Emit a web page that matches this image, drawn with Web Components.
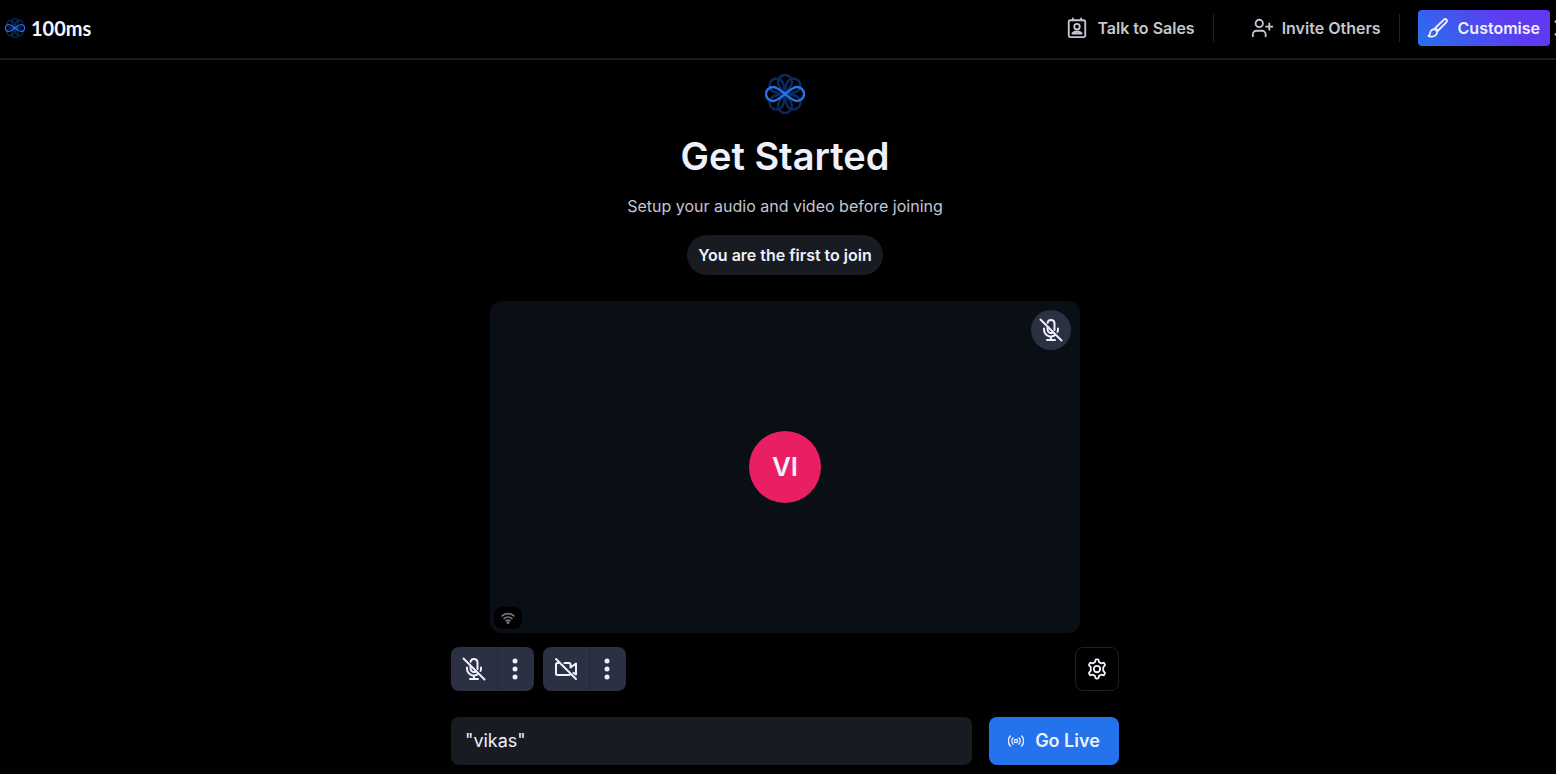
<!DOCTYPE html>
<html lang="en">
<head>
<meta charset="utf-8">
<meta name="viewport" content="width=device-width, initial-scale=1">
<title>100ms</title>
<style>
    body {
        margin: 0;
        background: #000;
        color: #eff0fa;
        font-family: Inter, "Liberation Sans", sans-serif;
        font-size: 16px;
    }
</style>
</head>
<body>
<preview-page></preview-page>

<script>
// icons are drawn on a 24 x 24 grid
const icons = {
    contact: `<rect x="3" y="3.500" width="18" height="18.500" rx="2"/><path d="M7.500 1.500v2M16.500 1.500v2"/><circle cx="12" cy="10.500" r="3"/><path d="M7 18c1-1.900 2.500-2.300 5-2.300s4 .4 5 2.300z"/>`,
    invite: `<circle cx="9" cy="7" r="4"/><path d="M2 21v-2a4 4 0 0 1 4-4h6a4 4 0 0 1 4 4v2M20 7v7M16.500 10.500h7"/>`,
    brush: `<path d="M9 12 18.500 2.800a1.900 1.900 0 0 1 2.700 2.700L12 15z"/><path d="M8.500 13.500a3.500 3.500 0 0 1 2 5C9 21.500 5 22 1.500 20.500c1.500-.5 1.700-1.500 2-3.500a4 4 0 0 1 5-3.500z"/>`,
    cross: `<path d="M4 4l16 16M20 4 4 20"/>`,
    mic: `<path d="M1.500 1.500l21 21M8.500 8.500v3a3.500 3.500 0 0 0 5.500 2.900M15.500 12V5.500a3.500 3.500 0 0 0-6.900-.8M5 10.500v1a7 7 0 0 0 11.500 5.300M19 10.500v1a7 7 0 0 1-.5 2.500M12 18.500V22M8 22h8"/>`,
    camera: `<path d="M2 2l20 20M4.500 6H3.500A1.500 1.500 0 0 0 2 7.500v9A1.500 1.500 0 0 0 3.500 18h11.500a1.500 1.500 0 0 0 1.300-1M10.500 6h4.500a1.500 1.500 0 0 1 1.500 1.500v3l5.500-4v11l-2.500-1.700"/>`,
    dots: `<g fill="currentColor" stroke="none"><circle cx="12" cy="4" r="2.500"/><circle cx="12" cy="12" r="2.500"/><circle cx="12" cy="20" r="2.500"/></g>`,
    gear: `<circle cx="12" cy="12" r="3.500"/><path d="M9.800 4.500 10.400 2.300a1 1 0 0 1 1-.8h1.200a1 1 0 0 1 1 .8l.6 2.200 2.200 1.300 2.200-.6a1 1 0 0 1 1.200.5l.8 1.300a1 1 0 0 1-.2 1.200L18.800 10v4l1.600 1.800a1 1 0 0 1 .2 1.200l-.8 1.300a1 1 0 0 1-1.200.5l-2.200-.6-2.200 1.300-.6 2.200a1 1 0 0 1-1 .8h-1.200a1 1 0 0 1-1-.8l-.6-2.200-2.200-1.300-2.200.6a1 1 0 0 1-1.200-.5L3.400 17a1 1 0 0 1 .2-1.200L5.200 14v-4L3.600 8.200A1 1 0 0 1 3.400 7l.8-1.300a1 1 0 0 1 1.200-.5l2.200.6z"/>`,
    live: `<circle cx="12" cy="12" r="2.500"/><path d="M7.500 7.500a6.500 6.500 0 0 0 0 9M16.500 7.500a6.500 6.500 0 0 1 0 9M3.500 4.500a11 11 0 0 0 0 15M20.500 4.500a11 11 0 0 1 0 15"/>`,
    wifi: `<path d="M2 8.500a15 15 0 0 1 20 0M5.500 12.800a10 10 0 0 1 13 0M8.800 16.800a5.500 5.500 0 0 1 6.400 0"/><circle cx="12" cy="20" r="1"/>`
};

class AppIcon extends HTMLElement {
    constructor() {
        super();
        this.root = this.attachShadow({mode: 'open'});
    }

    connectedCallback() {
        this.root.innerHTML = `
        <style>
        :host {
            display: block;
            flex: none;
            width: var(--icon-size, 24px);
            height: var(--icon-size, 24px);
        }
        svg {
            display: block;
            width: 100%;
            height: 100%;
            fill: none;
            stroke: currentColor;
            stroke-width: var(--icon-stroke, 2);
            stroke-linecap: round;
            stroke-linejoin: round;
        }
        </style>
        <svg viewBox="0 0 24 24" aria-hidden="true">${icons[this.getAttribute('name')]}</svg>
        `;
    }
}

class BrandMark extends HTMLElement {
    constructor() {
        super();
        this.root = this.attachShadow({mode: 'open'});
        const loop = 'M20 20C15 16 12 13 8 13a7 7 0 0 0 0 14C12 27 15 24 20 20S28 13 32 13a7 7 0 0 1 0 14C28 27 25 24 20 20z';
        this.root.innerHTML = `
        <style>
        :host {
            display: block;
            flex: none;
            width: var(--mark-size, 40px);
            height: var(--mark-size, 40px);
        }
        svg {
            display: block;
            width: 100%;
            height: 100%;
            fill: none;
            stroke-width: 2.4;
        }
        </style>
        <svg viewBox="0 0 40 40" aria-hidden="true">
            <g stroke="#0d2a5e">
                <path d="${loop}" transform="rotate(45 20 20)"/>
                <path d="${loop}" transform="rotate(90 20 20)"/>
                <path d="${loop}" transform="rotate(135 20 20)"/>
            </g>
            <path d="${loop}" stroke="#2572ed"/>
        </svg>
        `;
    }
}

class TopBar extends HTMLElement {
    constructor() {
        super();
        this.root = this.attachShadow({mode: 'open'});
        this.root.innerHTML = `
        <style>
        :host {
            display: block;
            overflow: hidden;
            border-bottom: 2px solid #1a1a1f;
        }
        header {
            display: flex;
            align-items: center;
            justify-content: space-between;
            height: 56px;
            padding-bottom: 2px;
            padding-left: 5px;
            margin-right: -16px;
        }
        .brand {
            display: flex;
            align-items: center;
            gap: 6px;
            color: #f5f5ff;
            font: 700 20px Lato, sans-serif;
            text-decoration: none;
            --mark-size: 20px;
        }
        nav {
            display: flex;
            align-items: center;
            --icon-size: 22px;
        }
        button {
            display: flex;
            align-items: center;
            box-sizing: border-box;
            height: 36px;
            gap: 9px;
            padding: 0;
            border: 0;
            background: none;
            color: #c5c6d0;
            font: 600 16px Inter, sans-serif;
            white-space: nowrap;
        }
        .rule {
            width: 1px;
            height: 28px;
            background: #22232a;
        }
        .sales { margin-right: 18px; }
        .invite { margin: 0 18px 0 37px; }
        .custom {
            margin: 0 2px 0 18px;
            padding: 0 10px 0 9px;
            border-radius: 4px;
            background: linear-gradient(45deg, #2572ed, #5f3af0 70%);
            color: #eff0fa;
        }
        .close { --icon-size: 20px; }
        </style>
        <header>
            <a class="brand" href="#"><brand-mark></brand-mark>100ms</a>
            <nav>
                <button class="sales" type="button"><app-icon name="contact"></app-icon>Talk to Sales</button>
                <span class="rule"></span>
                <button class="invite" type="button"><app-icon name="invite"></app-icon>Invite Others</button>
                <span class="rule"></span>
                <button class="custom" type="button"><app-icon name="brush"></app-icon>Customise</button>
                <button class="close" type="button" aria-label="Close"><app-icon name="cross"></app-icon></button>
            </nav>
        </header>
        `;
    }
}

class VideoTile extends HTMLElement {
    constructor() {
        super();
        this.root = this.attachShadow({mode: 'open'});
        this.root.innerHTML = `
        <style>
        :host {
            position: relative;
            display: flex;
            align-items: center;
            justify-content: center;
            box-sizing: border-box;
            width: 100%;
            max-width: 590px;
            aspect-ratio: 16 / 9;
            border-radius: 12px;
            background: #0a0e15;
        }
        .avatar {
            display: flex;
            align-items: center;
            justify-content: center;
            width: 72px;
            height: 72px;
            border-radius: 50%;
            background: #e91e63;
            font-size: 26px;
            font-weight: 600;
        }
        .muted, .signal {
            position: absolute;
            display: flex;
            align-items: center;
            justify-content: center;
        }
        .muted {
            top: 9px;
            right: 9px;
            width: 40px;
            height: 40px;
            border-radius: 50%;
            background: #2b3043;
        }
        .signal {
            bottom: 4px;
            left: 4px;
            width: 28px;
            height: 22px;
            border-radius: 8px;
            background: #000;
            color: #70727f;
            --icon-size: 14px;
            --icon-stroke: 3;
        }
        </style>
        <div class="avatar"><slot></slot></div>
        <span class="muted"><app-icon name="mic"></app-icon></span>
        <span class="signal"><app-icon name="wifi"></app-icon></span>
        `;
    }
}

class DeviceToggle extends HTMLElement {
    constructor() {
        super();
        this.root = this.attachShadow({mode: 'open'});
    }

    connectedCallback() {
        const label = this.getAttribute('label');
        this.root.innerHTML = `
        <style>
        :host {
            display: flex;
            overflow: hidden;
            height: 44px;
            border-radius: 8px;
            background: #2b3043;
        }
        button {
            display: flex;
            align-items: center;
            justify-content: center;
            width: 46px;
            padding: 0;
            border: 0;
            background: none;
            color: #eff0fa;
        }
        .more {
            width: 37px;
            padding-right: 2px;
            border-left: 1px solid #232737;
        }
        </style>
        <button type="button" aria-label="${label}"><app-icon name="${this.getAttribute('icon')}"></app-icon></button>
        <button class="more" type="button" aria-label="${label} options"><app-icon name="dots"></app-icon></button>
        `;
    }
}

class PreviewPage extends HTMLElement {
    constructor() {
        super();
        this.root = this.attachShadow({mode: 'open'});
        this.root.innerHTML = `
        <style>
        :host {
            display: block;
        }
        main {
            display: flex;
            flex-direction: column;
            align-items: center;
            padding: 14px 0 8px 14px;
        }
        h1 {
            margin: 18px 0 0;
            font-size: 38px;
            font-weight: 600;
            line-height: 48px;
        }
        p {
            margin: 13px 0 0;
            color: #c5c6d0;
            line-height: 26px;
        }
        .status {
            margin: 16px 0 26px;
            padding: 0 11px;
            border-radius: 20px;
            background: #191b23;
            font-weight: 600;
            line-height: 40px;
        }
        .controls, form {
            display: flex;
            box-sizing: border-box;
            width: 100%;
            max-width: 668px;
        }
        .controls {
            gap: 9px;
            margin: 14px 0 26px;
        }
        .settings {
            display: flex;
            align-items: center;
            justify-content: center;
            width: 44px;
            height: 44px;
            margin-left: auto;
            padding: 0;
            border: 1px solid #1d1f27;
            border-radius: 8px;
            background: none;
            color: #eff0fa;
            --icon-size: 22px;
        }
        form {
            gap: 17px;
        }
        input {
            flex: 1;
            box-sizing: border-box;
            min-width: 0;
            height: 48px;
            padding: 0 14px;
            border: 0;
            border-radius: 8px;
            background: #191b23;
            color: #eff0fa;
            font: 18px Inter, sans-serif;
        }
        .live {
            display: flex;
            align-items: center;
            justify-content: center;
            gap: 11px;
            width: 130px;
            height: 48px;
            padding: 0;
            border: 0;
            border-radius: 8px;
            background: #2572ed;
            color: #eff0fa;
            font: 600 18px Inter, sans-serif;
            --icon-size: 16px;
        }
        </style>
        <top-bar></top-bar>
        <main>
            <brand-mark></brand-mark>
            <h1>Get Started</h1>
            <p>Setup your audio and video before joining</p>
            <div class="status">You are the first to join</div>
            <video-tile>VI</video-tile>
            <div class="controls">
                <device-toggle icon="mic" label="Microphone"></device-toggle>
                <device-toggle icon="camera" label="Camera"></device-toggle>
                <button class="settings" type="button" aria-label="Settings"><app-icon name="gear"></app-icon></button>
            </div>
            <form>
                <input type="text" aria-label="Name" value="&quot;vikas&quot;">
                <button class="live" type="button"><app-icon name="live"></app-icon>Go Live</button>
            </form>
        </main>
        `;
    }
}

customElements.define('app-icon', AppIcon);
customElements.define('brand-mark', BrandMark);
customElements.define('top-bar', TopBar);
customElements.define('video-tile', VideoTile);
customElements.define('device-toggle', DeviceToggle);
customElements.define('preview-page', PreviewPage);
</script>
</body>
</html>
